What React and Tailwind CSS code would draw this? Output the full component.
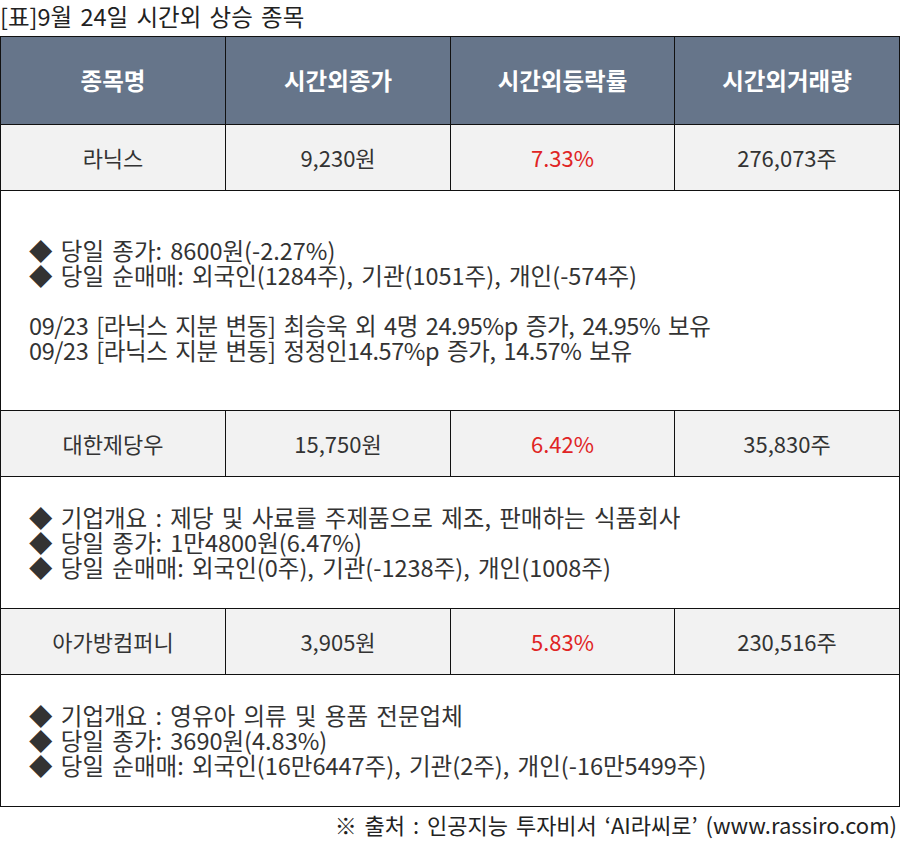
export default function App() {
  const font = { fontFamily: '"Malgun Gothic", "Noto Sans CJK KR", "Noto Sans", sans-serif' };
  const rows = [
    {
      name: "라닉스",
      price: "9,230원",
      rate: "7.33%",
      vol: "276,073주",
      h: "h-[220px]",
      lines: [
        "◆ 당일 종가: 8600원(-2.27%)",
        "◆ 당일 순매매: 외국인(1284주), 기관(1051주), 개인(-574주)",
        "",
        "09/23 [라닉스 지분 변동] 최승욱 외 4명 24.95%p 증가, 24.95% 보유",
        "09/23 [라닉스 지분 변동] 정정인14.57%p 증가, 14.57% 보유",
      ],
    },
    {
      name: "대한제당우",
      price: "15,750원",
      rate: "6.42%",
      vol: "35,830주",
      h: "h-[132px]",
      lines: [
        "◆ 기업개요 : 제당 및 사료를 주제품으로 제조, 판매하는 식품회사",
        "◆ 당일 종가: 1만4800원(6.47%)",
        "◆ 당일 순매매: 외국인(0주), 기관(-1238주), 개인(1008주)",
      ],
    },
    {
      name: "아가방컴퍼니",
      price: "3,905원",
      rate: "5.83%",
      vol: "230,516주",
      h: "h-[132px]",
      lines: [
        "◆ 기업개요 : 영유아 의류 및 용품 전문업체",
        "◆ 당일 종가: 3690원(4.83%)",
        "◆ 당일 순매매: 외국인(16만6447주), 기관(2주), 개인(-16만5499주)",
      ],
    },
  ];
  const cell = "border border-[#111] text-center align-middle";
  return (
    <div className="w-[900px] h-[850px] bg-white text-[#333] [word-spacing:3px]" style={font}>
      <div className="h-[36px] flex items-center text-[23.5px] leading-none text-[#222] pb-[3px]">
        [표]9월 24일 시간외 상승 종목
      </div>
      <table className="w-[899px] border-collapse table-fixed">
        <colgroup>
          <col className="w-[225px]" />
          <col className="w-[225px]" />
          <col className="w-[224px]" />
          <col className="w-[225px]" />
        </colgroup>
        <thead>
          <tr className="h-[88px] bg-[#66758a] text-white text-[23.5px] font-bold">
            <th className={cell}>종목명</th>
            <th className={cell}>시간외종가</th>
            <th className={cell}>시간외등락률</th>
            <th className={cell}>시간외거래량</th>
          </tr>
        </thead>
        <tbody>
          {rows.map((r) => (
            <>
              <tr key={r.name} className="h-[66px] bg-[#f2f2f2] text-[22px]">
                <td className={cell}>{r.name}</td>
                <td className={cell}>{r.price}</td>
                <td className={cell + " text-[#e02424]"}>{r.rate}</td>
                <td className={cell}>{r.vol}</td>
              </tr>
              <tr key={r.name + "d"} className={r.h}>
                <td colSpan={4} className="border border-[#111] align-middle pl-[28px] text-[23.5px] leading-[25px]">
                  {r.lines.map((l, i) => (
                    <div
                      key={i}
                      className={
                        l.startsWith("09/23")
                          ? "h-[25px] whitespace-nowrap tracking-[-0.4px]"
                          : "h-[25px] whitespace-nowrap"
                      }
                    >
                      {l}
                    </div>
                  ))}
                </td>
              </tr>
            </>
          ))}
        </tbody>
      </table>
      <div className="w-[897px] h-[34px] flex items-center justify-end text-[22px] text-[#222]">
        ※ 출처 : 인공지능 투자비서 ‘AI라씨로’ (www.rassiro.com)
      </div>
    </div>
  );
}
